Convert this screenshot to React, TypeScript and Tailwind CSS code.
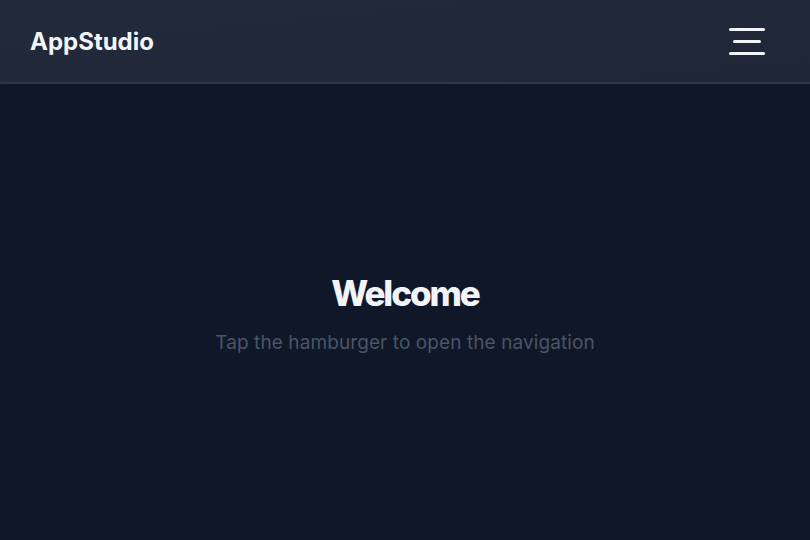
export default function App() {
  return (
    <div
      className="flex h-[540px] w-full flex-col bg-[#0f1729] text-slate-100"
      style={{ fontFamily: 'Inter, "Noto Sans", sans-serif' }}
    >
      {/* Top bar */}
      <header className="flex h-[84px] shrink-0 items-center justify-between border-b-2 border-[#2d3749] bg-gradient-to-br from-[#222a3c] to-[#1e2638] pl-[30px] pr-[45px]">
        <span className="mt-[1px] text-2xl font-bold text-[#f1f5f9]">AppStudio</span>
        <button
          type="button"
          aria-label="Open navigation"
          className="mt-[1px] flex h-11 w-9 flex-col items-center justify-center gap-[9px]"
        >
          <span className="block h-[3px] w-9 rounded-full bg-[#f1f5f9]" />
          <span className="block h-[3px] w-7 rounded-full bg-[#f1f5f9]" />
          <span className="block h-[3px] w-9 rounded-full bg-[#f1f5f9]" />
        </button>
      </header>

      {/* Content */}
      <main className="flex flex-1 flex-col items-center justify-center gap-[9px] text-center">
        <h1 className="text-[35px] font-extrabold tracking-[-0.06em] text-[#f1f5f9]">Welcome</h1>
        <p className="text-[19px] tracking-[0.005em] text-[#4a5568]">
          Tap the hamburger to open the navigation
        </p>
      </main>
    </div>
  );
}
